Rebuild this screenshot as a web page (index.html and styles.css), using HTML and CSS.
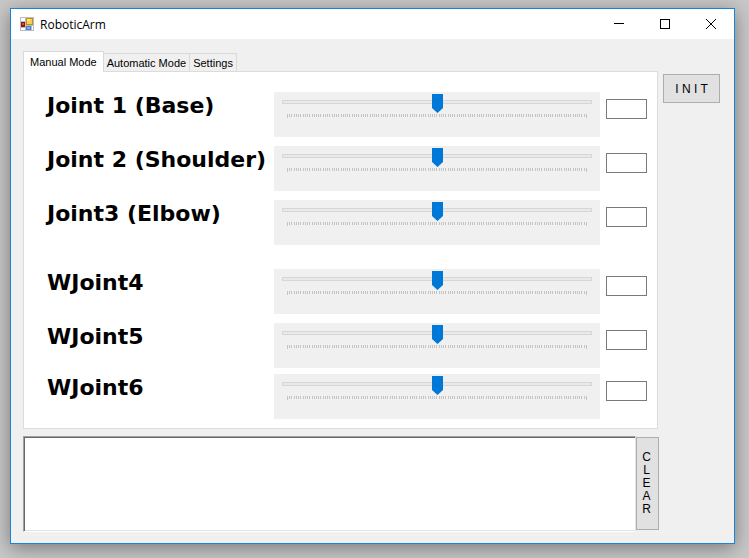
FILE: index.html
```html
<!DOCTYPE html>
<html lang="en">
<head>
<meta charset="utf-8">
<title>RoboticArm</title>
<link rel="stylesheet" href="styles.css">
</head>
<body>
<main class="window">
  <header class="titlebar">
    <svg class="app-icon" width="14" height="14" viewBox="0 0 14 14" shape-rendering="crispEdges" aria-hidden="true">
      <path fill="#b9bcc0" d="M0 0h14v14H0z"/>
      <path fill="#fff" d="M1 1h4v3H1zM1 11h4v2H1zM12 9h1v4h-1z"/>
      <path fill="#c98d12" d="M6 1h7v7H6z"/>
      <path fill="#f7cf4a" d="M7 2h5v5H7z"/>
      <path fill="#fbe9a0" d="M7 2h3v2H7z"/>
      <path fill="#8f1a0c" d="M1 5h4v5H1z"/>
      <path fill="#d8492f" d="M2 6h2v2H2z"/>
      <path fill="#4a7fd6" d="M6 9h5v4H6z"/>
      <path fill="#85aef0" d="M7 10h3v2H7z"/>
    </svg>
    <h1 class="title">RoboticArm</h1>
    <div class="window-controls">
      <button type="button" class="window-button" aria-label="Minimize"><svg width="10" height="10" viewBox="0 0 10 10" shape-rendering="crispEdges"><path d="M0 4.500h10"/></svg></button>
      <button type="button" class="window-button" aria-label="Maximize"><svg width="10" height="10" viewBox="0 0 10 10" shape-rendering="crispEdges"><path d="M.5.5h9v9h-9z"/></svg></button>
      <button type="button" class="window-button" aria-label="Close"><svg width="10" height="10" viewBox="0 0 10 10"><path d="M0 0l10 10M10 0L0 10"/></svg></button>
    </div>
  </header>
  <div class="client">
    <div class="main-column">
      <div class="tabs" role="tablist">
        <button type="button" class="tab tab-active" role="tab" aria-selected="true">Manual Mode</button>
        <button type="button" class="tab" role="tab" aria-selected="false">Automatic Mode</button>
        <button type="button" class="tab" role="tab" aria-selected="false">Settings</button>
      </div>
      <section class="panel" role="tabpanel">
        <div class="joint">
          <label class="joint-name" for="joint1">Joint 1 (Base)</label>
          <input class="slider" id="joint1" type="range" min="0" max="299" value="150">
          <input class="value" type="text" aria-label="Joint 1 value">
        </div>
        <div class="joint">
          <label class="joint-name" for="joint2">Joint 2 (Shoulder)</label>
          <input class="slider" id="joint2" type="range" min="0" max="299" value="150">
          <input class="value" type="text" aria-label="Joint 2 value">
        </div>
        <div class="joint joint-arm-end">
          <label class="joint-name" for="joint3">Joint3 (Elbow)</label>
          <input class="slider" id="joint3" type="range" min="0" max="299" value="150">
          <input class="value" type="text" aria-label="Joint 3 value">
        </div>
        <div class="joint">
          <label class="joint-name" for="joint4">WJoint4</label>
          <input class="slider" id="joint4" type="range" min="0" max="299" value="150">
          <input class="value" type="text" aria-label="Joint 4 value">
        </div>
        <div class="joint joint-tight">
          <label class="joint-name" for="joint5">WJoint5</label>
          <input class="slider" id="joint5" type="range" min="0" max="299" value="150">
          <input class="value" type="text" aria-label="Joint 5 value">
        </div>
        <div class="joint">
          <label class="joint-name" for="joint6">WJoint6</label>
          <input class="slider" id="joint6" type="range" min="0" max="299" value="150">
          <input class="value" type="text" aria-label="Joint 6 value">
        </div>
      </section>
      <div class="console">
        <textarea class="log" aria-label="Log"></textarea>
        <button type="button" class="button clear">C<br>L<br>E<br>A<br>R</button>
      </div>
    </div>
    <button type="button" class="button init">I N I T</button>
  </div>
</main>
</body>
</html>
```

FILE: styles.css
```css
* {
  box-sizing: border-box;
}

body {
  margin: 0;
  min-height: 100vh;
  padding: 8px 14px 14px 10px;
  display: flex;
  background: #c8c8c8;
  color: #000;
  font-family: "Liberation Sans", Arial, sans-serif;
  font-size: 12px;
}

button,
input,
textarea {
  margin: 0;
  padding: 0;
  border-radius: 0;
  color: inherit;
  font: inherit;
}

.window {
  flex: 1;
  display: flex;
  flex-direction: column;
  border: 1px solid #1883d7;
  background: #f0f0f0;
  box-shadow: 0 4px 18px rgba(0, 0, 0, 0.4);
}

.titlebar {
  display: flex;
  align-items: center;
  height: 30px;
  padding-left: 9px;
  background: #fff;
}

.title {
  margin: 0 0 0 6px;
  font-family: "Open Sans", sans-serif;
  font-size: 12px;
  font-weight: 400;
}

.window-controls {
  display: flex;
  margin-left: auto;
}

.window-button {
  display: flex;
  align-items: center;
  justify-content: center;
  width: 46px;
  height: 30px;
  border: 0;
  background: none;
}

.window-button path {
  fill: none;
  stroke: #000;
}

.client {
  flex: 1;
  display: flex;
  align-items: flex-start;
  gap: 4px;
  padding: 12px 14px 11px 12px;
}

.main-column {
  flex: 1;
  align-self: stretch;
  display: flex;
  flex-direction: column;
}

.tabs {
  display: flex;
  align-items: flex-end;
}

.tab {
  height: 18px;
  padding: 0 3px;
  border: 1px solid #d9d9d9;
  border-width: 1px 1px 0 0;
  background: #f0f0f0;
  font-size: 11px;
}

.tab-active {
  position: relative;
  height: 21px;
  margin-bottom: -1px;
  padding: 0 6px;
  border-left-width: 1px;
  background: #fff;
}

.panel {
  margin-right: 1px;
  padding: 20px 10px 9px 23px;
  border: 1px solid #dcdcdc;
  background: #fff;
}

.joint {
  display: flex;
  align-items: flex-start;
  margin-bottom: 9px;
}

.joint:last-child {
  margin-bottom: 0;
}

.joint-arm-end {
  margin-bottom: 24px;
}

.joint-tight {
  margin-bottom: 6px;
}

.joint-name {
  width: 227px;
  font-family: "DejaVu Sans", Verdana, sans-serif;
  font-size: 22px;
  font-weight: 700;
  line-height: 28px;
  white-space: nowrap;
}

.slider {
  flex: 1;
  min-width: 0;
  height: 45px;
  padding: 8px 8px 33px;
  appearance: none;
  background-color: #f0f0f0;
  background-image:
    linear-gradient(90deg, #c4c4c4 1px, transparent 1px calc(100% - 1px), #c4c4c4 calc(100% - 1px)),
    repeating-linear-gradient(90deg,
      #c4c4c4 0 1px, transparent 1px 2px, #c4c4c4 2px 3px, transparent 3px 4px,
      #c4c4c4 4px 5px, transparent 5px 7px, #c4c4c4 7px 8px, transparent 8px 9px,
      #c4c4c4 9px 10px, transparent 10px 11px, #c4c4c4 11px 12px, transparent 12px 13px,
      #c4c4c4 13px 14px, transparent 14px 16px, #c4c4c4 16px 17px, transparent 17px 18px,
      #c4c4c4 18px 19px, transparent 19px 20px, #c4c4c4 20px 21px, transparent 21px 22px,
      #c4c4c4 22px 23px, transparent 23px 25px, #c4c4c4 25px 26px, transparent 26px 27px,
      #c4c4c4 27px 28px, transparent 28px 29px);
  background-position: 13px 22px;
  background-size: calc(100% - 26px) 4px, calc(100% - 26px) 3px;
  background-repeat: no-repeat;
}

.slider::-webkit-slider-runnable-track {
  height: 4px;
  border: 1px solid #d6d6d6;
  border-width: 1px 0;
  background: #e7eaea;
  box-shadow: inset 1px 0 #d6d6d6, inset -1px 0 #d6d6d6;
}

.slider::-webkit-slider-thumb {
  appearance: none;
  width: 11px;
  height: 19px;
  margin-top: -7px;
  background: #0078d7;
  clip-path: polygon(0 0, 100% 0, 100% 14px, 50% 100%, 0 14px);
}

.value {
  width: 41px;
  height: 20px;
  margin: 7px 0 0 6px;
  border: 1px solid #7a7a7a;
  background: #fff;
}

.console {
  flex: 1;
  display: flex;
  align-items: stretch;
  margin-top: 7px;
}

.log {
  flex: 1;
  min-width: 0;
  resize: none;
  border: 1px solid;
  border-color: #a0a0a0 #e3e3e3 #fff #a0a0a0;
  background: #fff;
  box-shadow: inset 1px 1px #696969, inset 0 -1px #e3e3e3;
}

.button {
  border: 1px solid #adadad;
  background: #e1e1e1;
}

.clear {
  width: 23px;
  margin: 1px 0 2px;
  padding-right: 2px;
  line-height: 13px;
}

.init {
  width: 57px;
  height: 29px;
  margin-top: 23px;
}
```
